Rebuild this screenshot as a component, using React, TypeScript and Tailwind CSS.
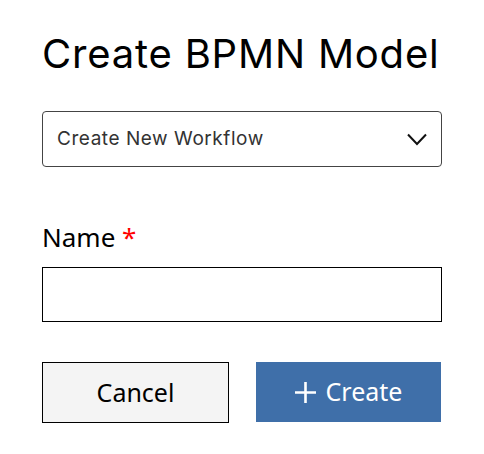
import React from "react";

export default function App() {
  return (
    <div className="w-[484px] h-[454px] bg-white">
      <div className="pl-[42px] pt-[30px] w-[442px] flex flex-col">
        <h1
          className="text-[40px] leading-[48px] tracking-[0.8px] font-normal text-black"
          style={{ fontFamily: "Inter, 'Noto Sans', sans-serif" }}
        >
          Create BPMN Model
        </h1>
        <div className="mt-[33px] h-[56px] w-[400px] border border-[#444] rounded-[4px] flex items-center justify-between pl-[14px] pr-[14px]">
          <span
            className="text-[19px] tracking-[0.55px] text-[#333]"
            style={{ fontFamily: "Inter, 'Noto Sans', sans-serif" }}
          >
            Create New Workflow
          </span>
          <svg width="20" height="13" viewBox="0 0 20 13" fill="none">
            <path d="M1 1.5 L10 11 L19 1.5" stroke="#111" strokeWidth="2" />
          </svg>
        </div>
        <label className="mt-[54px] text-[26px] leading-[32px] text-black" style={{ fontFamily: "'Noto Sans', sans-serif" }}>
          Name <span className="text-[#ff0000]">*</span>
        </label>
        <input className="mt-[14px] h-[55px] w-[400px] border border-black bg-white outline-none" />
        <div className="mt-[40px] flex items-start gap-[27px]">
          <button
            className="w-[187px] h-[61px] border border-black bg-[#f4f4f4] text-black text-[25px] flex items-center justify-center"
            style={{ fontFamily: "'Noto Sans', sans-serif" }}
          >
            Cancel
          </button>
          <button
            className="w-[185px] h-[60px] bg-[#3f6fa9] text-white text-[25px] flex items-center justify-center gap-[10px]"
            style={{ fontFamily: "'Noto Sans', sans-serif" }}
          >
            <svg width="21" height="21" viewBox="0 0 21 21">
              <path d="M10.5 0 V21 M0 10.5 H21" stroke="white" strokeWidth="2.6" />
            </svg>
            Create
          </button>
        </div>
      </div>
    </div>
  );
}
